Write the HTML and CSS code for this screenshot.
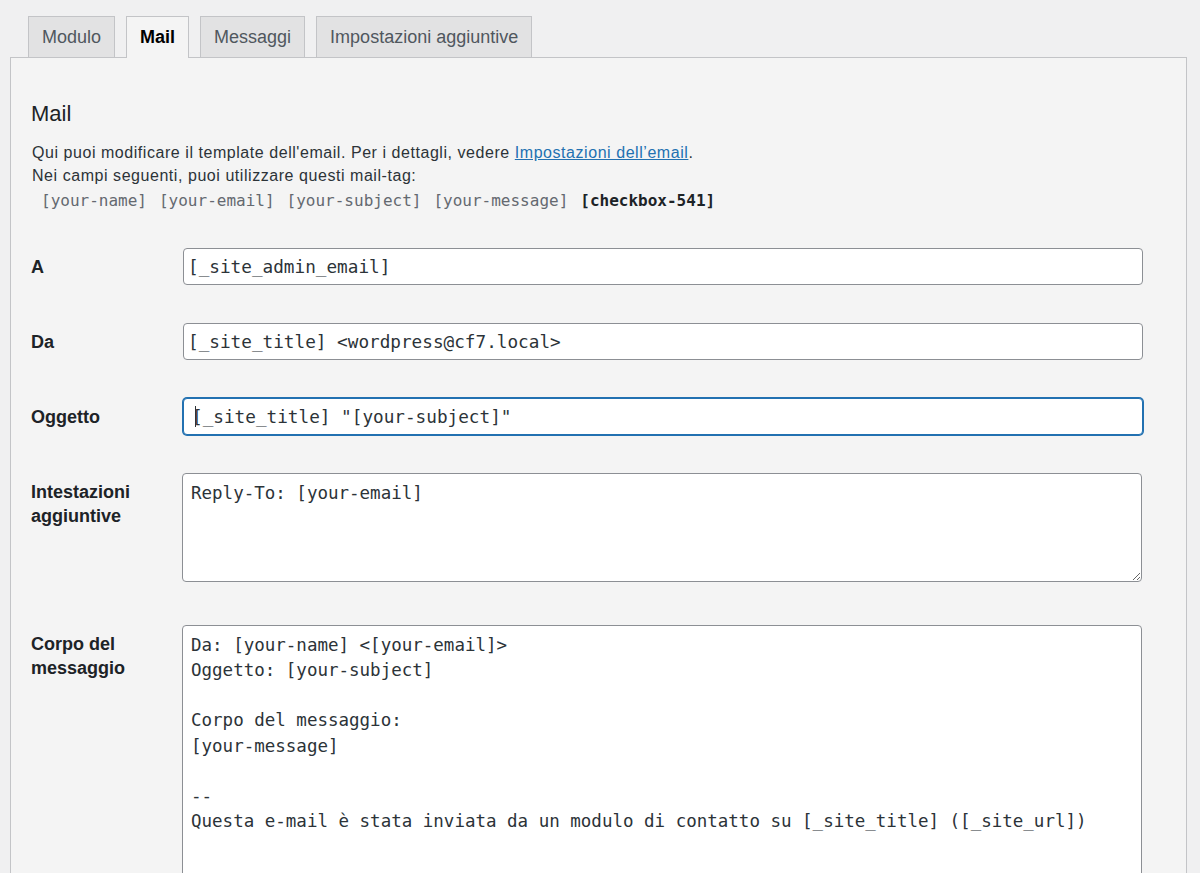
FILE: index.html
```html
<!DOCTYPE html>
<html lang="it">
<head>
<meta charset="utf-8">
<title>Mail</title>
<link rel="stylesheet" href="styles.css">
</head>
<body>
<div class="wrap">
  <ul class="tabs">
    <li class="tab">Modulo</li>
    <li class="tab active">Mail</li>
    <li class="tab">Messaggi</li>
    <li class="tab">Impostazioni aggiuntive</li>
  </ul>
  <div class="panel">
    <h2 class="title">Mail</h2>
    <p class="desc">Qui puoi modificare il template dell'email. Per i dettagli, vedere <a href="#">Impostazioni dell’email</a>.<br>Nei campi seguenti, puoi utilizzare questi mail-tag:</p>
    <div class="tags">
      <span class="tag">[your-name]</span>
      <span class="tag">[your-email]</span>
      <span class="tag">[your-subject]</span>
      <span class="tag">[your-message]</span>
      <span class="tag used">[checkbox-541]</span>
    </div>
    <div class="rows">
      <div class="row">
        <label class="label">A</label>
        <input class="field" type="text" value="[_site_admin_email]">
      </div>
      <div class="row">
        <label class="label">Da</label>
        <input class="field" type="text" value="[_site_title] &lt;wordpress@cf7.local&gt;">
      </div>
      <div class="row">
        <label class="label">Oggetto</label>
        <span class="field-wrap">
          <input class="field focused" type="text" value="[_site_title] &quot;[your-subject]&quot;">
          <span class="caret"></span>
        </span>
      </div>
      <div class="row row-area">
        <label class="label">Intestazioni<br>aggiuntive</label>
        <textarea class="area area-headers">Reply-To: [your-email]</textarea>
      </div>
      <div class="row">
        <label class="label">Corpo del<br>messaggio</label>
        <textarea class="area area-body">Da: [your-name] &lt;[your-email]&gt;
Oggetto: [your-subject]

Corpo del messaggio:
[your-message]

-- 
Questa e-mail è stata inviata da un modulo di contatto su [_site_title] ([_site_url])</textarea>
      </div>
    </div>
  </div>
</div>
</body>
</html>
```

FILE: styles.css
```css
html, body {
  margin: 0;
  padding: 0;
  height: 873px;
  overflow: hidden;
  background: #f0f0f1;
  font-family: "Liberation Sans", Arial, sans-serif;
  color: #1d2327;
}

.wrap {
  padding: 16px 13px 0 10px;
}

.tabs {
  list-style: none;
  margin: 0 0 -1px 0;
  padding: 0 0 0 18px;
  display: flex;
  align-items: flex-start;
  gap: 11px;
  position: relative;
  z-index: 2;
}

.tab {
  box-sizing: border-box;
  height: 41px;
  padding: 0 13px;
  border: 1px solid #c3c4c7;
  border-bottom: none;
  background: #e2e2e3;
  color: #50575e;
  font-size: 18px;
  line-height: 40px;
}

.tab.active {
  height: 42px;
  background: #f4f4f4;
  color: #000;
  font-weight: bold;
}

.panel {
  border: 1px solid #c3c4c7;
  background: #f4f4f4;
  padding: 42px 20px 0 20px;
  height: 900px;
}

.title {
  margin: 0;
  font-size: 22px;
  line-height: 28px;
  font-weight: 400;
  color: #1d2327;
}

.desc {
  margin: 13px 0 0 1px;
  font-size: 16px;
  line-height: 23px;
  letter-spacing: 0.55px;
  color: #2c3338;
}

.desc a {
  color: #2271b1;
  text-decoration: underline;
}

.tags {
  display: flex;
  gap: 12px;
  margin-top: 2px;
  padding-left: 10px;
  height: 24px;
  line-height: 24px;
  font-family: "DejaVu Sans Mono", "Liberation Mono", monospace;
  font-size: 16px;
  color: #646970;
}

.tag.used {
  color: #1d2327;
  font-weight: bold;
}

.rows {
  margin-top: 35px;
}

.row {
  display: grid;
  grid-template-columns: 152px 960px;
  margin-bottom: 38px;
}

.row-area {
  margin-bottom: 43px;
}

.label {
  padding-top: 7px;
  line-height: 24px;
  font-size: 18px;
  font-weight: bold;
  color: #1d2327;
}

.field {
  box-sizing: border-box;
  width: 960px;
  height: 37px;
  margin: 0;
  padding: 0 4px;
  border: 1px solid #8c8f94;
  border-radius: 4px;
  background: #fff;
  font-family: "DejaVu Sans Mono", "Liberation Mono", monospace;
  font-size: 17.7px;
  color: #2c3338;
  outline: none;
}

.field-wrap {
  position: relative;
  display: block;
}

.field.focused {
  padding-left: 8px;
  border-color: #2271b1;
  box-shadow: 0 0 0 1px #2271b1;
}

.caret {
  position: absolute;
  left: 12px;
  top: 8px;
  width: 1px;
  height: 21px;
  background: #2c3338;
}

.area {
  box-sizing: border-box;
  width: 960px;
  margin: 0 0 0 -1px;
  padding: 7px 8px 5px;
  border: 1px solid #8c8f94;
  border-radius: 4px;
  background: #fff;
  font-family: "DejaVu Sans Mono", "Liberation Mono", monospace;
  font-size: 17.5px;
  line-height: 25.15px;
  color: #2c3338;
  outline: none;
  overflow: hidden;
  display: block;
}

.area-headers {
  height: 109px;
}

.area-body {
  height: 320px;
}
```
